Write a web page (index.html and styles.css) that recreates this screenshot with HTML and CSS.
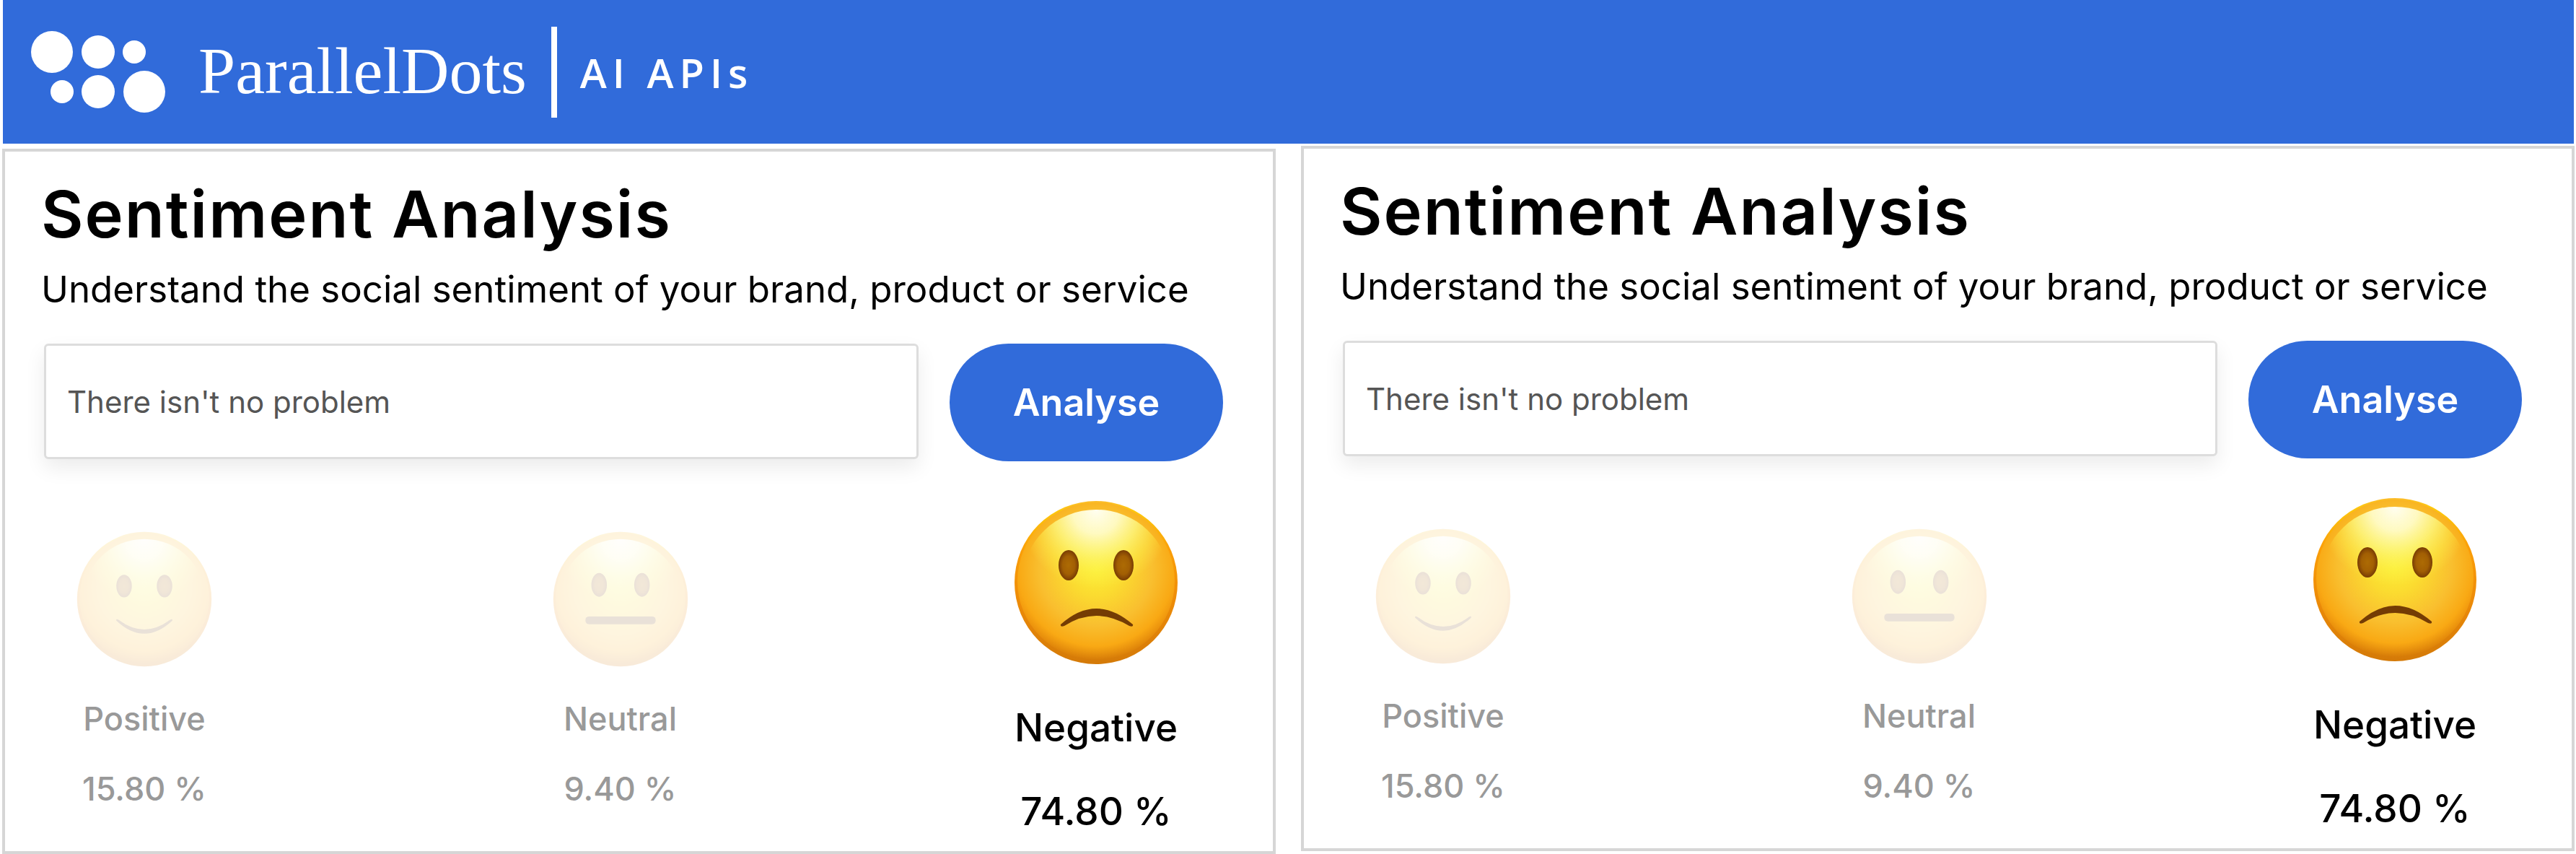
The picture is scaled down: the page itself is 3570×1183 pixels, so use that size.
FILE: index.html
```html
<!DOCTYPE html>
<html lang="en">
<head>
<meta charset="UTF-8" />
<meta name="viewport" content="width=device-width, initial-scale=1" />
<title>ParallelDots | AI APIs</title>
<link rel="stylesheet" href="styles.css">
</head>
<body>

<!-- shared face shapes -->
<svg class="defs" aria-hidden="true">
  <defs>
    <linearGradient id="rim" x1="0" y1="0" x2="0" y2="1">
      <stop offset="0" stop-color="#fcbc2a" />
      <stop offset="0.06" stop-color="#fdc80c" />
      <stop offset="0.3" stop-color="#fb9f08" />
      <stop offset="0.6" stop-color="#ee8c08" />
      <stop offset="1" stop-color="#d47a08" />
    </linearGradient>
    <radialGradient id="skin" cx="0.5" cy="0.42" r="0.58">
      <stop offset="0" stop-color="#fcee34" />
      <stop offset="0.3" stop-color="#fbdb30" />
      <stop offset="0.62" stop-color="#f9bf2f" />
      <stop offset="0.85" stop-color="#f9a914" />
      <stop offset="1" stop-color="#f9a914" stop-opacity="0" />
    </radialGradient>
    <radialGradient id="gloss" gradientUnits="userSpaceOnUse" cx="114" cy="14" r="108">
      <stop offset="0" stop-color="#fffef0" />
      <stop offset="0.3" stop-color="#fffcc8" stop-opacity="0.95" />
      <stop offset="0.55" stop-color="#fdf880" stop-opacity="0.8" />
      <stop offset="0.8" stop-color="#fdf550" stop-opacity="0.4" />
      <stop offset="1" stop-color="#fdf050" stop-opacity="0" />
    </radialGradient>
    <radialGradient id="eye">
      <stop offset="0" stop-color="#ad6b04" />
      <stop offset="0.6" stop-color="#a25f03" />
      <stop offset="1" stop-color="#783c04" />
    </radialGradient>
    <symbol id="face" viewBox="0 0 228 228">
      <circle cx="114" cy="114" r="113" fill="url(#rim)" />
      <circle cx="114" cy="112" r="109" fill="url(#skin)" />
      <ellipse cx="114" cy="110" rx="101" ry="97" fill="url(#gloss)" />
    </symbol>
    <symbol id="positive" viewBox="0 0 228 228">
      <use href="#face" />
      <ellipse cx="80" cy="92" rx="13" ry="19" fill="url(#eye)" />
      <ellipse cx="148" cy="92" rx="13" ry="19" fill="url(#eye)" />
      <path d="M67 150 Q66 146 71 149 Q114 181 157 149 Q162 146 161 150 Q114 194 67 150Z" fill="#743c04" />
    </symbol>
    <symbol id="neutral" viewBox="0 0 228 228">
      <use href="#face" />
      <ellipse cx="78" cy="90" rx="13" ry="20" fill="url(#eye)" />
      <ellipse cx="150" cy="90" rx="13" ry="20" fill="url(#eye)" />
      <rect x="55" y="143" width="118" height="13" rx="6" fill="#743c04" />
    </symbol>
    <symbol id="negative" viewBox="0 0 228 228">
      <use href="#face" />
      <ellipse cx="76" cy="90" rx="14" ry="21" fill="url(#eye)" />
      <ellipse cx="152" cy="90" rx="14" ry="21" fill="url(#eye)" />
      <path d="M65 172 Q114 128 165 172 Q166 176 160 174 Q114 146 70 174 Q64 176 65 172Z" fill="#743c04" />
    </symbol>
  </defs>
</svg>

<header class="header">
  <a class="brand" href="#">
    <svg class="logo" viewBox="0 0 188 114" aria-hidden="true">
      <circle cx="29" cy="29" r="29" />
      <circle cx="93" cy="29" r="23" />
      <circle cx="143" cy="29" r="16" />
      <circle cx="43" cy="84" r="16" />
      <circle cx="93" cy="84" r="23" />
      <circle cx="157" cy="84" r="29" />
    </svg>
    <span class="brand-name">ParallelDots</span>
  </a>
  <span class="product">AI APIs</span>
</header>

<main class="panels">
  <section class="panel panel-left">
    <h2>Sentiment Analysis</h2>
    <p class="intro">Understand the social sentiment of your brand, product or service</p>
    <form class="analyse-form">
      <input type="text" name="text" value="There isn't no problem" aria-label="Text to analyse" />
      <button type="submit">Analyse</button>
    </form>
    <div class="results">
      <div class="result">
        <svg class="emoji"><use href="#positive" /></svg>
        <p>Positive</p>
        <p class="score">15.80 %</p>
      </div>
      <div class="result">
        <svg class="emoji"><use href="#neutral" /></svg>
        <p>Neutral</p>
        <p class="score">9.40 %</p>
      </div>
      <div class="result active">
        <svg class="emoji"><use href="#negative" /></svg>
        <p>Negative</p>
        <p class="score">74.80 %</p>
      </div>
    </div>
  </section>

  <section class="panel">
    <h2>Sentiment Analysis</h2>
    <p class="intro">Understand the social sentiment of your brand, product or service</p>
    <form class="analyse-form">
      <input type="text" name="text" value="There isn't no problem" aria-label="Text to analyse" />
      <button type="submit">Analyse</button>
    </form>
    <div class="results">
      <div class="result">
        <svg class="emoji"><use href="#positive" /></svg>
        <p>Positive</p>
        <p class="score">15.80 %</p>
      </div>
      <div class="result">
        <svg class="emoji"><use href="#neutral" /></svg>
        <p>Neutral</p>
        <p class="score">9.40 %</p>
      </div>
      <div class="result active">
        <svg class="emoji"><use href="#negative" /></svg>
        <p>Negative</p>
        <p class="score">74.80 %</p>
      </div>
    </div>
  </section>
</main>

</body>
</html>
```
FILE: styles.css
```css
* { box-sizing:border-box; }
body { margin:0; background:#fff; color:#000; font-family:Inter, "Liberation Sans", sans-serif; }
h2, p { margin:0; }
.defs { position:absolute; width:0; height:0; }

.header { display:flex; align-items:center; height:199px; margin:0 3px 0 4px; padding-left:39px; background:#316bda; color:#fff; }
.brand { display:flex; align-items:center; gap:44px; color:#fff; text-decoration:none; }
.logo { width:188px; height:114px; fill:#fff; }
.brand-name { padding-bottom:4px; font-family:"Liberation Serif", serif; font-size:92px; line-height:100px; }
.product { margin-left:34px; padding-left:32px; border-left:8px solid #fff; font-family:"Open Sans", sans-serif; font-size:56px; font-weight:600; line-height:126px; letter-spacing:8px; }

.panels { display:grid; grid-template-columns:1fr 1fr; gap:35px; align-items:start; padding:3px 2px 0 3px; }
.panel { border:4px solid #d6d6d6; padding:32px 69px 20px 50px; }
.panel-left { margin-top:4px; }
h2 { font-size:90px; line-height:110px; font-weight:600; letter-spacing:2px; }
.intro { margin-top:14px; font-size:51px; line-height:70px; white-space:nowrap; }

.analyse-form { display:flex; align-items:flex-start; gap:43px; margin:40px 0 0 4px; }
input { flex:1; min-width:0; height:160px; padding:0 29px; border:3px solid #ddd; border-radius:6px; background:#fff; box-shadow:0 12px 28px rgba(0,0,0,0.08); color:#555; font:400 42px Inter, "Liberation Sans", sans-serif; }
button { width:379px; height:163px; border:none; border-radius:82px; background:#316bda; color:#fff; font:600 52px Inter, "Liberation Sans", sans-serif; cursor:pointer; }

.results { display:flex; justify-content:space-between; margin:54px 36px 0 3px; }
.result { width:280px; padding-top:43px; text-align:center; color:#999; font-size:45px; font-weight:500; line-height:60px; }
.emoji { display:block; width:188px; height:188px; margin:0 auto 42px; opacity:0.15; }
.score { margin-top:37px; }
.active { padding-top:0; color:#000; font-size:53px; line-height:70px; }
.active .emoji { width:228px; height:228px; margin-bottom:52px; opacity:1; }
.active .score { margin-top:46px; }
```
